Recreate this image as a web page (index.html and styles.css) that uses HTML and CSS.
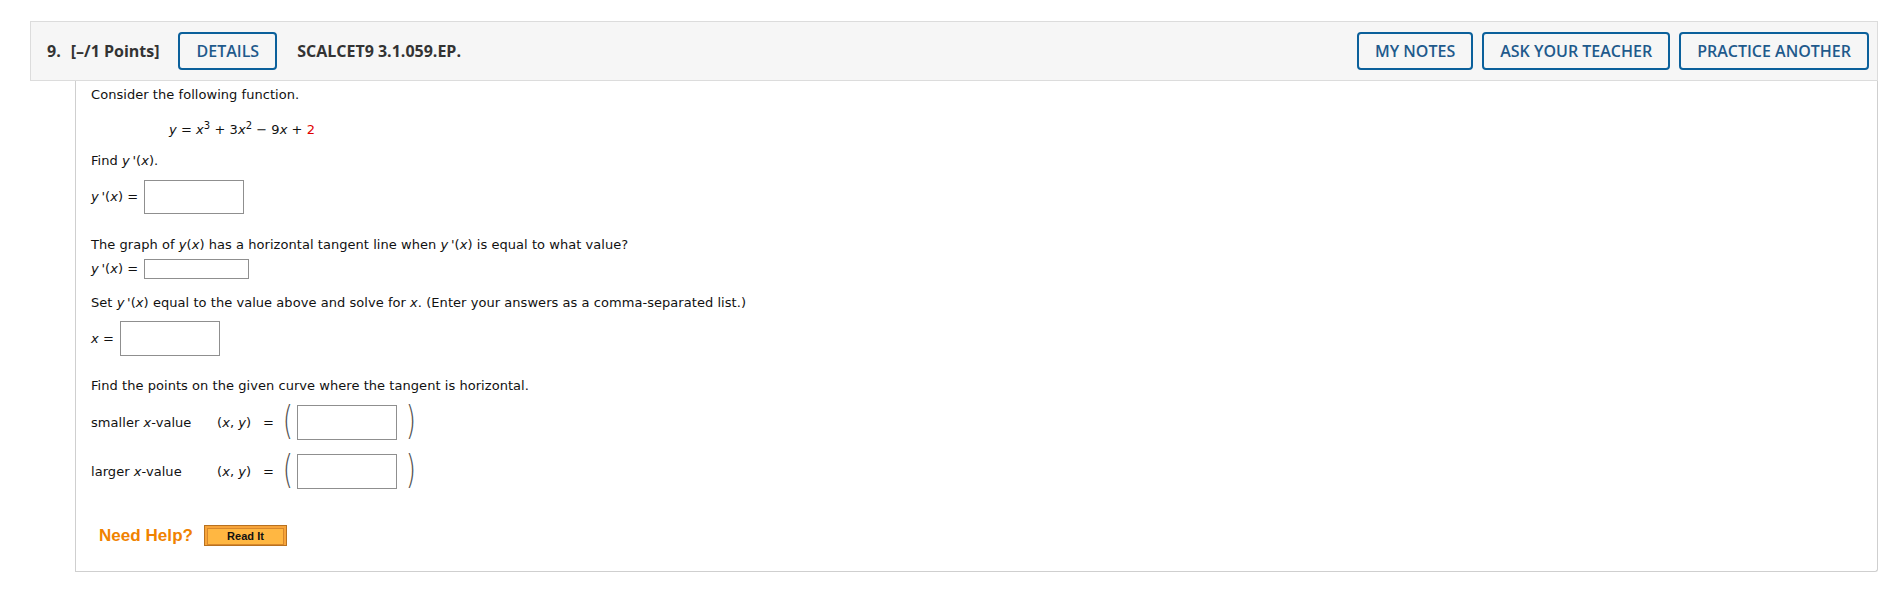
FILE: index.html
```html
<!DOCTYPE html>
<html lang="en">
<head>
  <meta charset="utf-8">
  <title>SCALCET9 3.1.059.EP.</title>
  <link rel="stylesheet" href="styles.css">
</head>
<body>
<div class="page">

  <div class="qhead">
    <span class="qnum">9.</span>
    <span class="qpoints">[&ndash;/1 Points]</span>
    <button class="btn btn-details">DETAILS</button>
    <span class="qcode">SCALCET9 3.1.059.EP.</span>
    <span class="spacer"></span>
    <button class="btn">MY NOTES</button>
    <button class="btn">ASK YOUR TEACHER</button>
    <button class="btn">PRACTICE ANOTHER</button>
  </div>

  <div class="qbody">
    <p class="txt">Consider the following function.</p>

    <p class="txt eq"><i>y</i> = <i>x</i><sup>3</sup> + 3<i>x</i><sup>2</sup> &minus; 9<i>x</i> + <span class="red">2</span></p>

    <p class="txt find">Find <i>y</i>&thinsp;'(<i>x</i>).</p>

    <div class="row row1">
      <span class="lbl"><i>y</i>&thinsp;'(<i>x</i>) =</span>
      <span class="ans ans-big"></span>
    </div>

    <p class="txt graph">The graph of <i>y</i>(<i>x</i>) has a horizontal tangent line when <i>y</i>&thinsp;'(<i>x</i>) is equal to what value?</p>

    <div class="row row2">
      <span class="lbl"><i>y</i>&thinsp;'(<i>x</i>) =</span>
      <span class="ans ans-small"></span>
    </div>

    <p class="txt set">Set <i>y</i>&thinsp;'(<i>x</i>) equal to the value above and solve for <i>x</i>. (Enter your answers as a comma-separated list.)</p>

    <div class="row row3">
      <span class="lbl"><i>x</i> =</span>
      <span class="ans ans-big"></span>
    </div>

    <p class="txt points">Find the points on the given curve where the tangent is horizontal.</p>

    <div class="row pt pt-first">
      <span class="ptname">smaller <i>x</i>-value</span>
      <span class="xy">(<i>x</i>, <i>y</i>)</span>
      <span class="eqs">=</span>
      <span class="paren">(</span>
      <span class="ans ans-big"></span>
      <span class="paren paren-r">)</span>
    </div>

    <div class="row pt">
      <span class="ptname">larger <i>x</i>-value</span>
      <span class="xy">(<i>x</i>, <i>y</i>)</span>
      <span class="eqs">=</span>
      <span class="paren">(</span>
      <span class="ans ans-big"></span>
      <span class="paren paren-r">)</span>
    </div>

    <div class="row help">
      <span class="needhelp">Need Help?</span>
      <span class="readit"><span class="readit-in">Read It</span></span>
    </div>
  </div>

</div>
</body>
</html>
```

FILE: styles.css
```css
body {
  margin: 0;
  background-color: #ffffff;
}

.page {
  padding: 21px 11px 0 30px;
}

/* question header bar */
.qhead {
  display: flex;
  align-items: center;
  height: 58px;
  padding: 0 8px 0 16px;
  border: 1px solid #dcdcdc;
  background-color: #f6f6f6;
  font-family: "Open Sans", "Liberation Sans", sans-serif;
  color: #333333;
}
.qnum {
  font-size: 16px;
  font-weight: 700;
  margin-right: 10px;
}
.qpoints {
  font-size: 16px;
  font-weight: 700;
}
.qcode {
  font-size: 16px;
  font-weight: 700;
  margin-left: 20px;
}
.spacer {
  flex: 1;
}
.btn {
  height: 38px;
  padding: 0 16px;
  margin-left: 9px;
  border: 2px solid #0b609b;
  border-radius: 4px;
  background: transparent;
  color: #1f5a8c;
  font-family: "Open Sans", "Liberation Sans", sans-serif;
  font-size: 16px;
  font-weight: 600;
}
.btn-details {
  margin-left: 19px;
}

/* question body */
.qbody {
  margin-left: 45px;
  padding: 6px 15px 25px 15px;
  border: 1px solid #cfcfcf;
  border-top: none;
  border-radius: 0 0 3px 0;
  font-family: "DejaVu Sans", Verdana, sans-serif;
  font-size: 13px;
  line-height: 16px;
  letter-spacing: 0.05px;
  color: #111111;
}
.txt {
  margin: 0;
}
.eq {
  margin: 19px 0 0 78px;
}
.eq sup {
  font-size: 10px;
  line-height: 0;
}
.red {
  color: #e00000;
}
.find   { margin-top: 15px; }
.graph  { margin-top: 23px; }
.set    { margin-top: 16px; }
.points { margin-top: 22px; }

.row {
  display: flex;
  align-items: center;
}
.row1 { margin-top: 11px; }
.row2 { margin-top: 6px; }
.row3 { margin-top: 10px; }

.ans {
  display: block;
  box-sizing: border-box;
  margin-left: 6px;
  border: 1px solid #8f8f8f;
  background-color: #ffffff;
}
.ans-big {
  width: 100px;
  height: 35px;
}
.ans-small {
  width: 105px;
  height: 20px;
}
.row1 .ans { height: 34px; }

/* point rows */
.pt {
  margin-top: 8px;
  height: 41px;
}
.ptname {
  width: 126px;
}
.xy {
  width: 46px;
}
.eqs {
  margin-right: 7px;
}
.paren {
  display: block;
  height: 41px;
  line-height: 38px;
  font-family: "DejaVu Sans", sans-serif;
  font-size: 35px;
  font-weight: 200;
  color: #505050;
  transform: scale(0.75, 1.12);
}
.pt .ans {
  margin-left: 2px;
}
.paren-r {
  margin-left: 7px;
}

/* need help */
.help {
  margin-top: 33px;
  padding-left: 8px;
}
.needhelp {
  font-family: "Liberation Sans", Arial, sans-serif;
  font-size: 17px;
  font-weight: 700;
  color: #f08200;
}
.readit {
  display: block;
  box-sizing: border-box;
  width: 83px;
  height: 21px;
  margin-left: 11px;
  padding: 2px;
  border: 1px solid #b8711f;
  background-color: #f7a43a;
}
.readit-in {
  display: block;
  height: 15px;
  border: 1px solid #d8882b;
  background-color: #ffb742;
  font-family: "Liberation Sans", Arial, sans-serif;
  font-size: 11px;
  font-weight: 700;
  line-height: 15px;
  text-align: center;
  color: #111111;
}
```
